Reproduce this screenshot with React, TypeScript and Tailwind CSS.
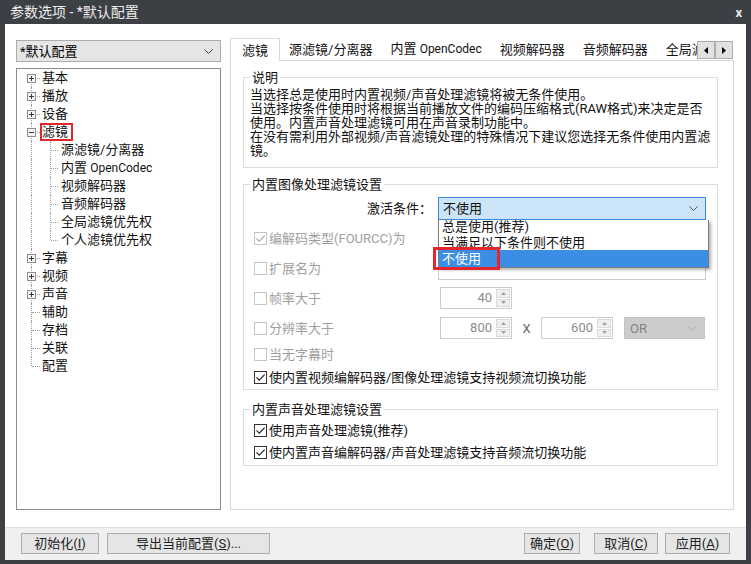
import React from 'react';

type CheckProps = { checked?: boolean; disabled?: boolean };

const Check = ({ checked, disabled }: CheckProps) => (
  <span
    className={`w-[13px] h-[13px] flex-shrink-0 border bg-white flex items-center justify-center ${
      disabled ? 'border-[#c4c4c4]' : 'border-[#333333]'
    }`}
  >
    {checked && (
      <svg width="11" height="11" viewBox="0 0 11 11">
        <path d="M1.5 5.3 L4.3 8.2 L9.6 2.6" fill="none" stroke={disabled ? '#a8a8a8' : '#222222'} strokeWidth="1.2" />
      </svg>
    )}
  </span>
);

const Chevron = ({ color = '#555555' }: { color?: string }) => (
  <svg width="9" height="5" viewBox="0 0 9 5">
    <path d="M0.5 0.5 L4.5 4.5 L8.5 0.5" stroke={color} fill="none" />
  </svg>
);

// Latin run of "内置 OpenCodec" is narrower in the original font
const Label = ({ text }: { text: string }) =>
  text.includes('OpenCodec') ? (
    <span>
      {text.replace('OpenCodec', '')}
      <span className="text-[12px]">OpenCodec</span>
    </span>
  ) : (
    <span>{text}</span>
  );

const Spin = ({ value, className }: { value: string; className: string }) => (
  <div className={`flex h-[22px] border border-[#cccccc] bg-white ${className}`}>
    <div className="flex-1 text-right pr-[4px] leading-[20px] text-[#8c8c8c]">{value}</div>
    <div className="w-[15px] flex flex-col gap-[1px] py-[1px] pr-[1px]">
      <div className="flex-1 bg-[#f0f0f0] border border-[#dadada] flex items-center justify-center">
        <svg width="5" height="3" viewBox="0 0 5 3"><path d="M0 3 L2.5 0 L5 3Z" fill="#a0a0a0" /></svg>
      </div>
      <div className="flex-1 bg-[#f0f0f0] border border-[#dadada] flex items-center justify-center">
        <svg width="5" height="3" viewBox="0 0 5 3"><path d="M0 0 L2.5 3 L5 0Z" fill="#a0a0a0" /></svg>
      </div>
    </div>
  </div>
);

// checkbox + label, starts at the group's left edge
const Opt = ({ label, checked, disabled }: { label: string; checked?: boolean; disabled?: boolean }) => (
  <div className="flex items-center pl-[10px] flex-shrink-0">
    <Check checked={checked} disabled={disabled} />
    <span className={`ml-[2px] leading-[15px] whitespace-nowrap ${disabled ? 'text-[#a0a0a0]' : 'text-[#111111]'}`}>
      {label}
    </span>
  </div>
);

const Group = ({ title, className, children }: { title: string; className: string; children: React.ReactNode }) => (
  <div className={`relative border border-[#dcdcdc] ${className}`}>
    <span className="absolute -top-[8px] left-[6px] bg-white px-[2px] leading-[15px] text-[#111111]">{title}</span>
    {children}
  </div>
);

const tree = [
  { label: '基本', kind: 'plus' },
  { label: '播放', kind: 'plus' },
  { label: '设备', kind: 'plus' },
  { label: '滤镜', kind: 'minus', mark: true },
  { label: '源滤镜/分离器', kind: 'child' },
  { label: '内置 OpenCodec', kind: 'child' },
  { label: '视频解码器', kind: 'child' },
  { label: '音频解码器', kind: 'child' },
  { label: '全局滤镜优先权', kind: 'child' },
  { label: '个人滤镜优先权', kind: 'child', last: true },
  { label: '字幕', kind: 'plus' },
  { label: '视频', kind: 'plus' },
  { label: '声音', kind: 'plus' },
  { label: '辅助', kind: 'leaf' },
  { label: '存档', kind: 'leaf' },
  { label: '关联', kind: 'leaf' },
  { label: '配置', kind: 'leaf' },
];

const inactiveTabs = ['源滤镜/分离器', '内置 OpenCodec', '视频解码器', '音频解码器', '全局滤镜优先权'];

const Btn = ({ className, children }: { className: string; children: React.ReactNode }) => (
  <div
    className={`h-[21px] border border-[#adadad] bg-[#e5e5e5] flex items-center justify-center leading-[15px] text-[#222222] ${className}`}
  >
    <span>{children}</span>
  </div>
);

export default function App() {
  return (
    <div className="w-[751px] h-[564px] bg-[#3c3f44] flex flex-col font-['Roboto','Noto_Sans_CJK_SC',sans-serif] text-[13px] overflow-hidden">
      {/* Title bar */}
      <div className="h-[24px] flex items-center justify-between pl-[10px] pr-[9px] text-[#ececec]">
        <span className="text-[14px] leading-[16px]">参数选项 - *默认配置</span>
        <span className="text-[13px] leading-none font-bold">x</span>
      </div>

      <div className="mx-[5px] h-[536px] bg-white flex flex-col">
        <div className="flex-1 flex pl-[11px] pt-[14px] pb-[17px]">
          {/* Left column */}
          <div className="w-[205px] pt-[2px] flex flex-col">
            <div className="h-[22px] border border-[#acacac] bg-[#e5e5e5] flex items-center justify-between pl-[3px] pr-[7px]">
              <span className="leading-[15px]">*默认配置</span>
              <Chevron color="#444444" />
            </div>
            <div className="mt-[6px] flex-1 border border-[#8c8c8c] bg-white">
              {tree.map((t, i) => {
                const child = t.kind === 'child';
                const box = t.kind === 'plus' || t.kind === 'minus';
                return (
                  <div key={i} className="relative h-[18px] flex items-center">
                    <span
                      className={`absolute left-[14px] w-0 border-l border-dotted border-[#a0a0a0] ${
                        i === 0 ? 'top-[9px] bottom-0' : i === tree.length - 1 ? 'top-0 h-[9px]' : 'top-0 bottom-0'
                      }`}
                    />
                    {child ? (
                      <>
                        <span
                          className={`absolute left-[33px] w-0 border-l border-dotted border-[#a0a0a0] ${
                            t.last ? 'top-0 h-[9px]' : 'top-0 bottom-0'
                          }`}
                        />
                        <span className="absolute left-[34px] top-[9px] w-[7px] border-t border-dotted border-[#a0a0a0]" />
                      </>
                    ) : (
                      <span className="absolute left-[15px] top-[9px] w-[8px] border-t border-dotted border-[#a0a0a0]" />
                    )}
                    {box && (
                      <span className="absolute left-[10px] top-[5px] flex">
                        <svg width="9" height="9" viewBox="0 0 9 9">
                          <rect x="0.5" y="0.5" width="8" height="8" fill="#f4f4f4" stroke="#8f8f8f" />
                          <path d="M2 4.5H7" stroke="#3a3a3a" />
                          {t.kind === 'plus' && <path d="M4.5 2V7" stroke="#3a3a3a" />}
                        </svg>
                      </span>
                    )}
                    <span className={`leading-[18px] whitespace-nowrap text-[#111111] ${child ? 'ml-[44px]' : 'ml-[25px]'}`}>
                      <Label text={t.label} />
                    </span>
                    {t.mark && <span className="absolute left-[23px] top-0 w-[33px] h-[18px] border-2 border-[#e2262c]" />}
                  </div>
                );
              })}
            </div>
          </div>

          {/* Right column */}
          <div className="ml-[9px] w-[504px] flex flex-col">
            {/* Tabs */}
            <div className="h-[22px] flex">
              <div className="relative z-10 h-[23px] px-[11px] flex items-center bg-white border border-b-0 border-[#d9d9d9] leading-[15px] text-[#111111]">
                滤镜
              </div>
              <div className="flex-1 flex overflow-hidden">
                {inactiveTabs.map(t => (
                  <div key={t} className="h-[22px] px-[9px] flex items-center whitespace-nowrap leading-[15px] text-[#111111]">
                    <Label text={t} />
                  </div>
                ))}
              </div>
              <div className="mt-[3px] mr-[1px] h-[18px] flex">
                <div className="w-[18px] h-[18px] border border-[#adadad] bg-[#e1e1e1] flex items-center justify-center">
                  <svg width="4" height="7" viewBox="0 0 4 7"><path d="M4 0 L0 3.5 L4 7Z" fill="#000000" /></svg>
                </div>
                <div className="w-[18px] h-[18px] border border-[#adadad] bg-[#e1e1e1] flex items-center justify-center">
                  <svg width="4" height="7" viewBox="0 0 4 7"><path d="M0 0 L4 3.5 L0 7Z" fill="#000000" /></svg>
                </div>
              </div>
            </div>

            {/* Tab panel */}
            <div className="flex-1 border border-[#d9d9d9] bg-white pl-[12px] pr-[15px] pt-[16px]">
              <Group title="说明" className="pt-[10px] pb-[9px] pl-[6px]">
                <div className="leading-[14px] text-[#111111] whitespace-nowrap">
                  <div>当选择总是使用时内置视频/声音处理滤镜将被无条件使用。</div>
                  <div>当选择按条件使用时将根据当前播放文件的编码压缩格式(RAW格式)来决定是否</div>
                  <div>使用。内置声音处理滤镜可用在声音录制功能中。</div>
                  <div>在没有需利用外部视频/声音滤镜处理的特殊情况下建议您选择无条件使用内置滤</div>
                  <div>镜。</div>
                </div>
              </Group>

              <Group title="内置图像处理滤镜设置" className="mt-[16px] pt-[8px]">
                <div className="h-[30px] flex items-center">
                  <div className="w-[188px] text-right leading-[15px] text-[#111111]">激活条件：</div>
                  <div className="relative ml-[6px]">
                    <div className="w-[268px] h-[23px] border border-[#3d8bd9] bg-[#cce4f7] flex items-center justify-between pl-[4px] pr-[7px]">
                      <span className="leading-[15px] text-[#111111]">不使用</span>
                      <Chevron />
                    </div>
                    <div className="absolute z-20 top-[23px] left-0 w-[271px] bg-white border border-t-0 border-[#7a7a7a] shadow-[2px_2px_3px_rgba(0,0,0,0.3)]">
                      <div className="h-[15px] overflow-hidden pl-[3px]">
                        <div className="-mt-[1px] leading-[15px] text-[#111111]">总是使用(推荐)</div>
                      </div>
                      <div className="h-[15px] pl-[3px] leading-[15px] text-[#111111]">当满足以下条件则不使用</div>
                      <div className="h-[17px] pl-[3px] leading-[17px] bg-[#3b8ee6] text-white">不使用</div>
                      <span className="absolute -left-[6px] top-[27px] w-[67px] h-[23px] border-[3px] border-[#e2262c]" />
                    </div>
                  </div>
                </div>
                <div className="h-[30px] flex items-center">
                  <div className="w-[194px] flex-shrink-0">
                    <Opt label="编解码类型(FOURCC)为" checked disabled />
                  </div>
                  <div className="w-[268px] h-[23px] border border-[#cccccc] bg-white" />
                </div>
                <div className="h-[30px] flex items-center">
                  <div className="w-[194px] flex-shrink-0">
                    <Opt label="扩展名为" disabled />
                  </div>
                  <div className="w-[268px] h-[23px] border border-[#cccccc] bg-white" />
                </div>
                <div className="h-[30px] flex items-center">
                  <div className="w-[196px] flex-shrink-0">
                    <Opt label="帧率大于" disabled />
                  </div>
                  <Spin value="40" className="w-[72px]" />
                </div>
                <div className="h-[30px] flex items-center">
                  <div className="w-[196px] flex-shrink-0">
                    <Opt label="分辨率大于" disabled />
                  </div>
                  <Spin value="800" className="w-[72px]" />
                  <span className="w-[29px] text-center leading-[15px] text-[#666666]">X</span>
                  <Spin value="600" className="w-[72px]" />
                  <div className="ml-[11px] w-[81px] h-[22px] bg-[#cccccc] border border-[#c4c4c4] flex items-center justify-between pl-[5px] pr-[7px]">
                    <span className="leading-[15px] text-[#838383]">OR</span>
                    <Chevron color="#a8a8a8" />
                  </div>
                </div>
                <div className="h-[22px] flex items-center">
                  <Opt label="当无字幕时" disabled />
                </div>
                <div className="h-[24px] flex items-center">
                  <Opt label="使内置视频编解码器/图像处理滤镜支持视频流切换功能" checked />
                </div>
              </Group>

              <Group title="内置声音处理滤镜设置" className="mt-[19px] pt-[9px] pb-[2px]">
                <div className="h-[22px] flex items-center">
                  <Opt label="使用声音处理滤镜(推荐)" checked />
                </div>
                <div className="h-[22px] flex items-center">
                  <Opt label="使内置声音编解码器/声音处理滤镜支持音频流切换功能" checked />
                </div>
              </Group>
            </div>
          </div>
        </div>

        {/* Bottom bar */}
        <div className="h-[33px] border-t border-[#dfdfdf] bg-[#f0f0f0] flex items-start pt-[5px] pl-[16px] pr-[16px]">
          <Btn className="w-[78px]">
            初始化(<span className="underline">I</span>)
          </Btn>
          <Btn className="ml-[8px] w-[163px]">
            导出当前配置(<span className="underline">S</span>)...
          </Btn>
          <div className="flex-1" />
          <Btn className="w-[56px]">
            确定(<span className="underline">O</span>)
          </Btn>
          <Btn className="ml-[14px] w-[64px]">
            取消(<span className="underline">C</span>)
          </Btn>
          <Btn className="ml-[7px] w-[65px]">
            应用(<span className="underline">A</span>)
          </Btn>
        </div>
      </div>
    </div>
  );
}
